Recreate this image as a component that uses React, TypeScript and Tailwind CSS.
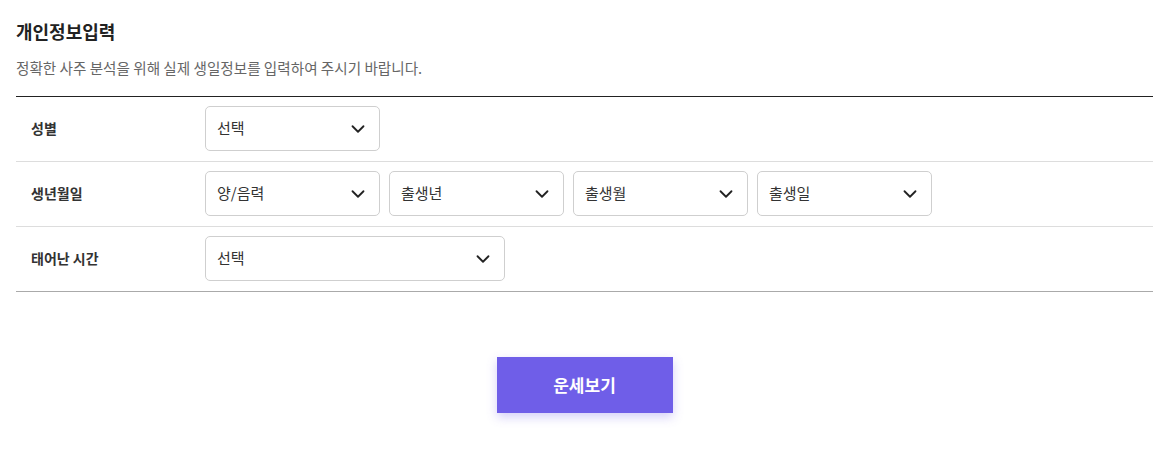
import { ChevronDown } from "lucide-react";

/** 개인정보입력 폼 — 사주 분석용 생년월일 입력 */

const FONT = { fontFamily: '"Noto Sans CJK KR", "Noto Sans", sans-serif' };

function Select({ label, width }: { label: string; width: string }) {
  return (
    <div
      className={`flex h-[45px] ${width} items-center justify-between rounded-[5px] border border-[#cfcfcf] bg-white pl-[11px] pr-[10px] text-[15px] text-[#333]`}
    >
      <span>{label}</span>
      <ChevronDown size={22} strokeWidth={2} className="text-[#222]" />
    </div>
  );
}

function Row({
  label,
  children,
  last,
}: {
  label: string;
  children: React.ReactNode;
  last?: boolean;
}) {
  return (
    <div
      className={`flex h-[65px] items-center border-b pb-[1px] ${last ? "border-[#aaaaaa]" : "border-[#dddddd]"}`}
    >
      <div className="w-[189px] pl-[15px] text-[14px] font-bold text-[#333]">{label}</div>
      <div className="flex gap-[9px]">{children}</div>
    </div>
  );
}

export default function App() {
  return (
    <div className="min-h-screen bg-white" style={FONT}>
      <div className="ml-4 w-[1137px] pt-[18px]">
        <h1 className="text-[18px] font-bold leading-[26px] text-[#222]">개인정보입력</h1>
        <p className="mt-[14px] text-[14.6px] leading-[20px] text-[#666]">
          정확한 사주 분석을 위해 실제 생일정보를 입력하여 주시기 바랍니다.
        </p>

        <div className="mt-[18px] border-t border-[#222]">
          <Row label="성별">
            <Select label="선택" width="w-[175px]" />
          </Row>
          <Row label="생년월일">
            <Select label="양/음력" width="w-[175px]" />
            <Select label="출생년" width="w-[175px]" />
            <Select label="출생월" width="w-[175px]" />
            <Select label="출생일" width="w-[175px]" />
          </Row>
          <Row label="태어난 시간" last>
            <Select label="선택" width="w-[300px]" />
          </Row>
        </div>

        <div className="mt-[65px] flex justify-center">
          <button className="h-[56px] w-[176px] bg-[#6f5ee8] text-[17px] font-bold text-white shadow-[0_4px_10px_rgba(111,94,232,0.3)]">
            운세보기
          </button>
        </div>
      </div>
    </div>
  );
}
